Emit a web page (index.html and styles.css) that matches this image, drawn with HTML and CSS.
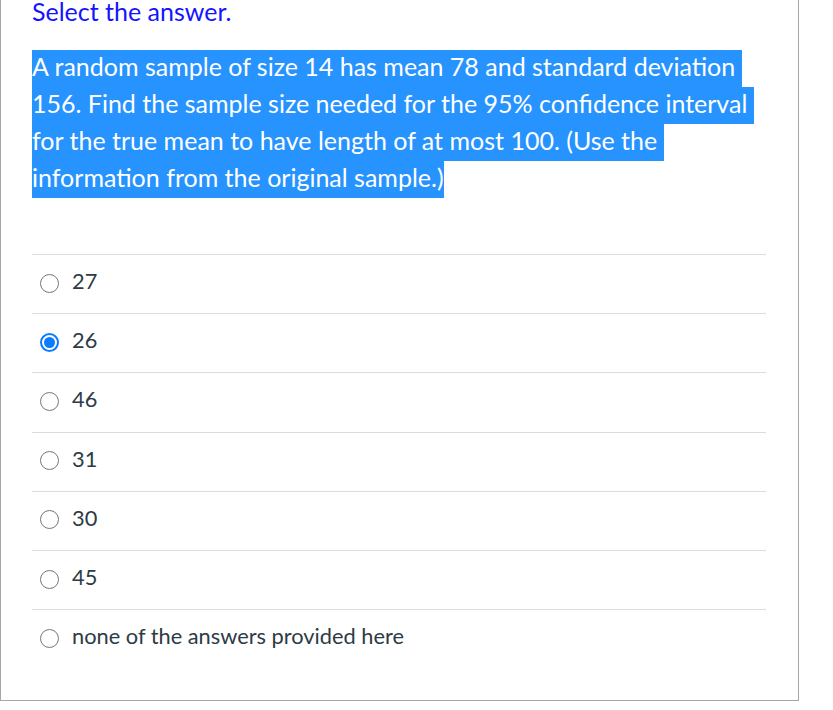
FILE: index.html
```html
<!DOCTYPE html>
<html lang="en">
<head>
<meta charset="utf-8">
<title>Select the answer</title>
<link rel="stylesheet" href="styles.css">
</head>
<body>
<div class="card">
  <div class="prompt">Select the answer.</div>
  <div class="question"><span class="hl">A random sample of size 14 has mean 78 and standard deviation 156. Find the sample size needed for the 95% confidence interval for the true mean to have length of at most 100. (Use the information from the original sample.)</span></div>
  <ul class="options">
    <li class="option"><span class="radio"></span><span class="label">27</span></li>
    <li class="option"><span class="radio checked"></span><span class="label">26</span></li>
    <li class="option"><span class="radio"></span><span class="label">46</span></li>
    <li class="option"><span class="radio"></span><span class="label">31</span></li>
    <li class="option"><span class="radio"></span><span class="label">30</span></li>
    <li class="option"><span class="radio"></span><span class="label">45</span></li>
    <li class="option"><span class="radio"></span><span class="label">none of the answers provided here</span></li>
  </ul>
</div>
</body>
</html>
```
FILE: styles.css
```css
html, body {
  margin: 0;
  padding: 0;
  background: #ffffff;
}
body {
  font-family: Lato, "Noto Sans", sans-serif;
}
.card {
  box-sizing: border-box;
  width: 799px;
  height: 701px;
  border-left: 1px solid #a6a6a6;
  border-right: 1px solid #a6a6a6;
  border-bottom: 1px solid #a6a6a6;
  padding-left: 31px;
}
.prompt {
  font-size: 25px;
  line-height: 23px;
  color: #1414ff;
}
.question {
  margin-top: 24.5px;
  width: 745px;
  font-size: 25px;
  line-height: 37px;
  color: #ffffff;
  white-space: pre-wrap;
}
.hl {
  background: #2693ff;
  padding: 1px 0 6px 0;
}
.options {
  list-style: none;
  margin: 58.5px 0 0 0;
  padding: 0;
  width: 734px;
}
.option {
  box-sizing: border-box;
  height: 59.2px;
  border-top: 1px solid #dcdcdc;
  display: flex;
  align-items: center;
  padding-left: 8px;
  padding-bottom: 2px;
}
.radio {
  box-sizing: border-box;
  width: 19px;
  height: 19px;
  border-radius: 50%;
  border: 1.5px solid #767676;
  flex: none;
  margin-right: 13px;
  position: relative;
}
.radio.checked {
  border: 2px solid #0a7cff;
  background: #ffffff;
}
.radio.checked::after {
  content: "";
  position: absolute;
  left: 2px;
  top: 2px;
  width: 11px;
  height: 11px;
  border-radius: 50%;
  background: #0a7cff;
}
.label {
  font-size: 21.8px;
  color: #2d3b45;
  line-height: 26px;
  margin-bottom: 4px;
}
```
